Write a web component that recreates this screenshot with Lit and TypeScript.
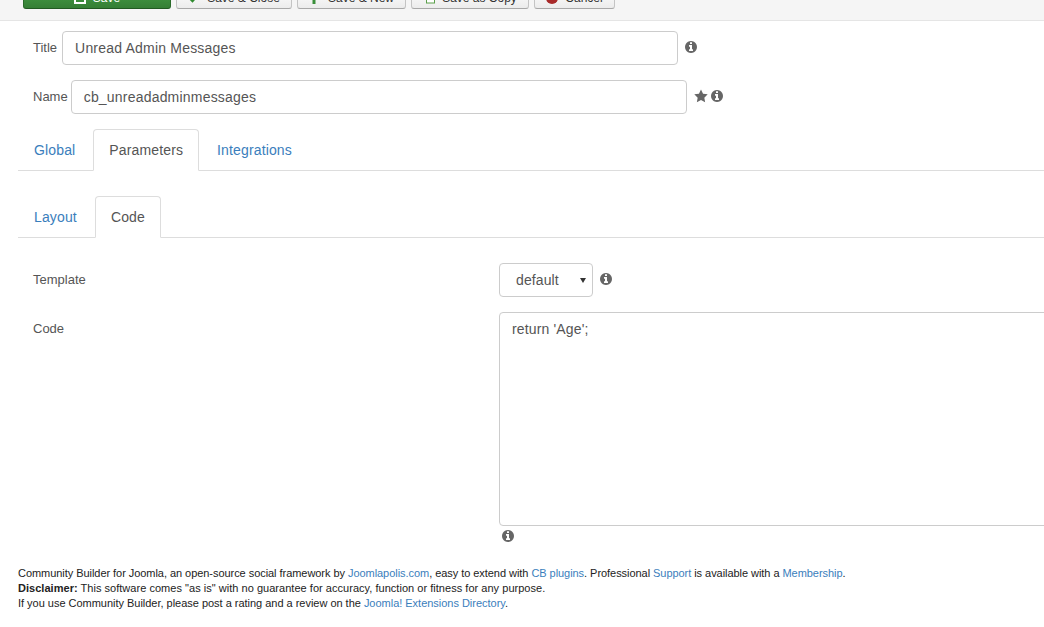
import { LitElement, html, css } from "lit";
import { customElement } from "lit/decorators.js";

const info = html`<svg class="ic" viewBox="0 0 1536 1536" width="12" height="12"><path fill="#666" d="M1024 1248v-160q0-14-9-23t-23-9h-96V544q0-14-9-23t-23-9H544q-14 0-23 9t-9 23v160q0 14 9 23t23 9h96v320h-96q-14 0-23 9t-9 23v160q0 14 9 23t23 9h448q14 0 23-9t9-23zM896 352V192q0-14-9-23t-23-9H672q-14 0-23 9t-9 23v160q0 14 9 23t23 9h192q14 0 23-9t9-23zm640 416q0 209-103 385.500T1153.500 1433 768 1536t-385.500-103T103 1153.500 0 768t103-385.500T382.500 103 768 0t385.500 103T1433 382.500 1536 768z"/></svg>`;
const star = html`<svg class="ic" viewBox="0 0 24 24" width="14" height="14"><path fill="#666" d="M12 .8l3.500 7.300 8 1.100-5.800 5.600 1.400 8L12 19l-7.100 3.800 1.400-8L.5 9.200l8-1.100z"/></svg>`;
const iSave = html`<svg class="bi" viewBox="0 0 12 12" width="12" height="12"><rect x="1" y="1" width="10" height="10" fill="none" stroke="#fff" stroke-width="2"/></svg>`;
const iCheck = html`<svg class="bi" viewBox="0 0 12 12" width="12" height="12"><path d="M1.500 6l3 3 6-7" fill="none" stroke="#2f8a2f" stroke-width="2.400"/></svg>`;
const iPlus = html`<svg class="bi" viewBox="0 0 12 12" width="12" height="12"><path d="M5 0v12M0 6h10" fill="none" stroke="#3a8f3a" stroke-width="3"/></svg>`;
const iCopy = html`<svg class="bi" viewBox="0 0 12 12" width="12" height="12"><rect x="3.500" y="1.500" width="8" height="9.500" fill="#fff" stroke="#5a9f4a"/></svg>`;
const iCancel = html`<svg class="bi" viewBox="0 0 12 12" width="12" height="12"><circle cx="6" cy="6" r="6" fill="#a82a2a"/></svg>`;

@customElement("app-root")
export class AppRoot extends LitElement {
  static styles = css`
    :host { display: block; width: 1044px; height: 627px; overflow: hidden; background: #fff;
      font-family: "Liberation Sans", Arial, sans-serif; font-size: 14px; line-height: 20px; color: #555; }
    a { color: #3a7ebc; text-decoration: none; }
    .toolbar { height: 21px; box-sizing: border-box; background: #f5f5f5; border-bottom: 1px solid #e5e5e5;
      display: flex; align-items: flex-end; gap: 5px; padding: 0 0 11px 23px; overflow: hidden; }
    .btn { flex: none; height: 22px; box-sizing: border-box; border: 1px solid #c4c4c4; border-bottom-color: #a8a8a8; border-radius: 3px;
      background: linear-gradient(#fff, #ececec); color: #333; display: flex; align-items: center; justify-content: center; gap: 7px; font-size: 12px; }
    .btn.save { width: 148px; background: linear-gradient(#46a046, #357f35); border-color: #2a6a2a; border-bottom-color: #215a21; color: #fff; }
    .b1 { width: 116px; } .b2 { width: 109px; } .b3 { width: 118px; } .b4 { width: 81px; }
    .bi { flex: none; display: block; }
    .main { padding: 10px 0 0 18px; }
    .row { display: flex; align-items: center; }
    .r1 { padding-left: 15px; height: 34px; }
    .r2 { padding-left: 15px; height: 34px; margin-top: 15px; }
    .lab { font-size: 13px; }
    .lab1 { margin-right: 5px; }
    .lab2 { margin-right: 3px; }
    .input { box-sizing: border-box; height: 34px; border: 1px solid #ccc; border-radius: 4px; padding: 0 12px; color: #555; display: flex; align-items: center; flex: none; letter-spacing: .2px; }
    .i1 { width: 616px; }
    .i2 { width: 616px; }
    .ic { flex: none; display: block; }
    .row > .ic { margin-top: -2px; }
    .i1 + .ic { margin-left: 7px; }
    .i2 + .ic { margin-left: 7px; }
    .star-i { margin-left: 3px; margin-top: -2px; }
    .tabs { display: flex; border-bottom: 1px solid #ddd; height: 42px; box-sizing: border-box; letter-spacing: .14px; }
    .t1 { margin-top: 15px; }
    .t2 { margin-top: 25px; }
    .tab { padding: 0 15px; height: 42px; box-sizing: border-box; display: flex; align-items: center; color: #3a7ebc; border: 1px solid transparent; margin-right: 2px; border-radius: 4px 4px 0 0; }
    .tab.on { color: #555; border-color: #ddd; border-bottom-color: #fff; background: #fff; }
    .fields { padding-left: 15px; margin-top: 25px; display: grid; grid-template-columns: 466px 1fr; }
    .fl { font-size: 13px; line-height: 18px; }
    .fl1 { align-self: center; }
    .select { width: 94px; height: 34px; box-sizing: border-box; border: 1px solid #ccc; border-radius: 4px; padding-left: 16px; padding-right: 6px; display: flex; align-items: center; justify-content: space-between; letter-spacing: .1px; }
    .arrow { width: 0; height: 0; border-left: 3px solid transparent; border-right: 3px solid transparent; border-top: 5px solid #333; }
    .sel-row { gap: 7px; }
    .code { grid-column: 2; }
    .area { margin-top: 15px; width: 620px; height: 214px; box-sizing: border-box; border: 1px solid #ccc; border-radius: 4px; padding: 6px 12px; letter-spacing: .15px; }
    .fl2 { margin-top: 15px; padding-top: 8px; }
    .code > .ic { margin: 4px 0 0 3px; }
    .foot { margin-top: 24px; font-size: 11px; line-height: 15px; color: #222; }
    .l1 { letter-spacing: -.05px; } .l2 { letter-spacing: .03px; } .l3 { letter-spacing: -.02px; }
  `;
  render() {
    return html`
      <div class="toolbar">
        <div class="btn save">${iSave}<span>Save</span></div>
        <div class="btn b1">${iCheck}<span>Save &amp; Close</span></div>
        <div class="btn b2">${iPlus}<span>Save &amp; New</span></div>
        <div class="btn b3">${iCopy}<span>Save as Copy</span></div>
        <div class="btn b4">${iCancel}<span>Cancel</span></div>
      </div>
      <div class="main">
        <div class="row r1"><span class="lab lab1">Title</span><div class="input i1">Unread Admin Messages</div>${info}</div>
        <div class="row r2"><span class="lab lab2">Name</span><div class="input i2">cb_unreadadminmessages</div>${star}<span class="star-i">${info}</span></div>
        <div class="tabs t1"><div class="tab"><a>Global</a></div><div class="tab on">Parameters</div><div class="tab"><a>Integrations</a></div></div>
        <div class="tabs t2"><div class="tab"><a>Layout</a></div><div class="tab on">Code</div></div>
        <div class="fields">
          <div class="fl fl1">Template</div>
          <div class="row sel-row"><div class="select"><span>default</span><span class="arrow"></span></div>${info}</div>
          <div class="fl fl2">Code</div>
          <div class="code"><div class="area">return 'Age';</div>${info}</div>
        </div>
        <div class="foot">
          <div class="l1">Community Builder for Joomla, an open-source social framework by <a>Joomlapolis.com</a>, easy to extend with <a>CB plugins</a>. Professional <a>Support</a> is available with a <a>Membership</a>.</div>
          <div class="l2"><b>Disclaimer:</b> This software comes "as is" with no guarantee for accuracy, function or fitness for any purpose.</div>
          <div class="l3">If you use Community Builder, please post a rating and a review on the <a>Joomla! Extensions Directory</a>.</div>
        </div>
      </div>`;
  }
}
